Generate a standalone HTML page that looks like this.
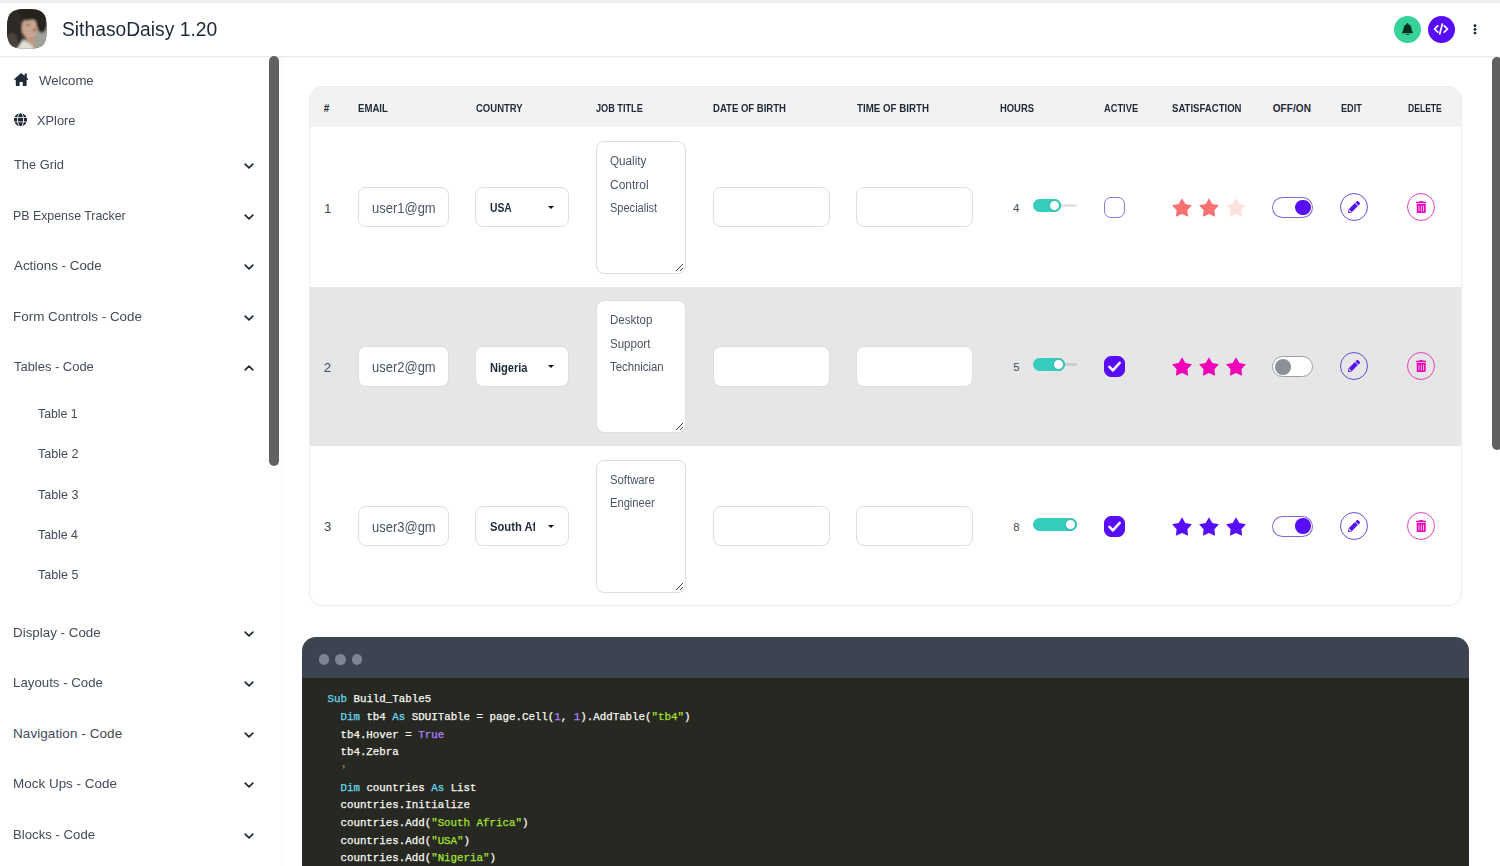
<!DOCTYPE html>
<html lang="en">
<head>
<meta charset="utf-8">
<title>SithasoDaisy 1.20</title>
<style>
*{box-sizing:border-box;margin:0;padding:0}
html,body{width:1500px;height:866px;overflow:hidden;background:#fff}
body{font-family:"Liberation Sans",sans-serif;color:#1f2937;position:relative}
.abs{position:absolute}
.t{position:absolute;white-space:nowrap;transform-origin:0 0}
/* navbar */
#nav{position:absolute;left:0;top:0;width:1500px;height:56px;background:#fff;box-shadow:0 1.200px 0 #ebebeb,0 2px 1.500px rgba(0,0,0,.035);z-index:5}
#topband{position:absolute;left:0;top:0;width:1500px;height:2.600px;background:linear-gradient(#f2f2f3,#ebebec)}
#avatar{position:absolute;left:6.900px;top:8.900px;width:39.800px;height:39.800px}
.ttl{color:#1f2937}
.cbtn{position:absolute;width:27.200px;height:27.200px;border-radius:50%;top:15.700px}
/* sidebar */
#side{position:absolute;left:0;top:58px;width:280px;height:808px;background:#fff}
.mi{color:#434b58}
.chev{position:absolute;left:243.500px;width:10px;height:6px}
#sthumb{position:absolute;left:269.200px;top:56.300px;width:9.800px;height:409.500px;border-radius:5px;background:#616161;z-index:6}
#sline{position:absolute;left:281px;top:58px;width:1px;height:808px;background:#f6f6f6}
#rthumb{position:absolute;left:1492.200px;top:56.500px;width:9.800px;height:393.500px;border-radius:5px;background:#616161;z-index:6}
/* table */
#card{position:absolute;left:309px;top:86.400px;width:1153px;height:520.100px;border-radius:13px;border:1px solid #eeeeee;background:#fff;overflow:hidden}
#thead{position:absolute;left:0;top:0;width:100%;height:39.200px;background:#f2f2f2}
.h{color:#1f2937}
.row{position:absolute;left:0;width:100%;height:159.300px}
.row.z{background:#e6e6e6}
.in{position:absolute;left:0;width:100%;height:100%}
.num{color:#434b58}
.em{color:#4b5563}
.co{color:#1f2937;overflow:hidden;max-width:45.500px}
.jb{color:#4b5563}
.hv{color:#434b58}
.inp{position:absolute;top:60px;height:40.300px;border:1px solid #dedede;border-radius:8px;background:#fff}
.ta{position:absolute;left:285.700px;top:14.200px;width:90px;height:132.900px;border:1px solid #dedede;border-radius:8px;background:#fff}
.car{position:absolute;left:72px;top:18px;width:0;height:0;border-left:3.500px solid transparent;border-right:3.500px solid transparent;border-top:3.500px solid #111}
.grip{position:absolute;right:1px;bottom:1px;width:9px;height:9px}
.rng{position:absolute;left:722.900px;top:72px;width:44.200px;height:13px}
.rng u{position:absolute;left:0;top:5px;width:44.200px;height:3px;border-radius:1.500px;background:rgba(0,0,0,.105)}
.rng s{position:absolute;left:0;top:0;height:13px;border-radius:6.500px;background:#37cdbe}
.rng i{position:absolute;top:0;width:13px;height:13px;border-radius:50%;background:#fff;border:2.300px solid #3ac4b6}
.cb{position:absolute;left:794px;top:70px;width:21px;height:21px;border-radius:7px;border:1px solid rgba(70,40,190,.62)}
.cb.on{background:#570df8;border-color:#570df8}
.star{position:absolute;top:71px;width:20px;height:19px}
.tg{position:absolute;left:962.400px;top:70px;width:40.400px;height:21px;border-radius:11px;border:1px solid rgba(70,40,190,.7);background:#fff}
.tg i{position:absolute;top:1.700px;width:15.600px;height:15.600px;border-radius:50%;background:#570df8;left:21.700px}
.tg.off{border-color:#9a9ea6}
.tg.off i{left:2px;background:#8b9099}
.rb{position:absolute;top:66px;width:28px;height:28px;border-radius:50%;border:1px solid rgba(75,30,215,.8);background:transparent}
.rb.d{border-color:rgba(225,20,175,.8)}
.rb svg{position:absolute}
/* code */
#mock{position:absolute;left:302.100px;top:637.300px;width:1166.500px;height:240px;border-radius:14px 14px 0 0;background:#3d4451;overflow:hidden}
#mock .dots{position:absolute;left:16.600px;top:17px}
#mock .dots i{display:inline-block;width:10.400px;height:10.400px;border-radius:50%;background:#7f8492;margin-right:6.100px;float:left}
#code{position:absolute;left:0;top:40.900px;width:100%;height:200px;background:#272822;color:#f8f8f2;font-family:"Liberation Mono",monospace;font-size:10.800px;line-height:17.650px;padding:13.100px 0 0 25.400px;white-space:pre;-webkit-text-stroke:.250px}
.k{color:#66d9ef}.n{color:#ae81ff}.s{color:#a6e22e}.c{color:#88887b}
</style>
</head>
<body>
<div id="nav">
  <div id="topband"></div>
  <svg id="avatar" viewBox="0 0 40 40">
    <defs>
      <clipPath id="sq"><path d="M20 0C4 0 0 4 0 20s4 20 20 20 20-4 20-20S36 0 20 0Z"/></clipPath>
      <filter id="bl" x="-10%" y="-10%" width="120%" height="120%"><feGaussianBlur stdDeviation="0.900"/></filter>
    </defs>
    <g clip-path="url(#sq)">
      <rect width="40" height="40" fill="#38312d"/>
      <g filter="url(#bl)">
        <rect x="-2" y="-2" width="44" height="44" fill="#38312d"/>
        <path d="M26 18L42 10V42H23Z" fill="#9fa098"/>
        <path d="M18 26h9.500l.5 12h-7z" fill="#bf9882"/>
        <ellipse cx="22.500" cy="19" rx="8" ry="10" fill="#caa690"/>
        <ellipse cx="27.500" cy="21" rx="1.800" ry="1.400" fill="#a5553f"/><ellipse cx="21" cy="16" rx="2" ry=".800" fill="#6b4a3e"/>
        <ellipse cx="35" cy="13" rx="5.500" ry="11" fill="#26211f"/>
        <ellipse cx="20" cy="3.500" rx="21" ry="8" fill="#26211f"/>
        <ellipse cx="6.500" cy="20" rx="8.500" ry="22" fill="#2f2926"/>
        <ellipse cx="5" cy="33" rx="6" ry="9" fill="#4a433d"/>
        <path d="M8.500 42L16.500 30.500 26 37.500 27 42Z" fill="#e0e0d4"/>
      </g>
    </g>
  </svg>
<div class="t nav ttl" style="left:62.00px;top:17.40px;font-size:19.4px;line-height:25px;transform:scaleX(0.9929);">SithasoDaisy 1.20</div>
  <div class="cbtn" style="left:1394px;background:#36d399"><svg class="abs" style="left:8.100px;top:7.100px" width="11" height="12.500" viewBox="0 0 448 512"><path fill="#013220" d="M224 512c35.320 0 63.970-28.650 63.970-64H160.030c0 35.350 28.650 64 63.970 64zm215.390-149.710c-19.320-20.760-55.470-51.990-55.470-154.290 0-77.700-54.480-139.900-127.940-155.160V32c0-17.670-14.320-32-31.980-32s-31.980 14.330-31.980 32v20.840C118.560 68.100 64.080 130.300 64.080 208c0 102.300-36.150 133.530-55.470 154.290-6 6.450-8.660 14.160-8.610 21.710.11 16.400 12.980 32 32.100 32h383.800c19.120 0 32-15.600 32.100-32 .05-7.550-2.610-15.270-8.610-21.710z"/></svg></div>
  <div class="cbtn" style="left:1427.900px;background:#570df8"><svg class="abs" style="left:5.600px;top:7.600px" width="16" height="12" viewBox="0 0 16 12"><path d="M4.800 2.800L1.500 6l3.300 3.200M11.200 2.800L14.500 6l-3.300 3.200M9.300 1L6.700 11" stroke="#fff" stroke-width="1.700" fill="none" stroke-linecap="round" stroke-linejoin="round"/></svg></div>
  <svg class="abs" style="left:1473px;top:23.900px" width="4" height="11" viewBox="0 0 4 11"><circle cx="2" cy="1.700" r="1.450" fill="#1f2937"/><circle cx="2" cy="5.400" r="1.450" fill="#1f2937"/><circle cx="2" cy="9.100" r="1.450" fill="#1f2937"/></svg>
</div>

<div id="side">
  <svg class="abs" style="left:13.800px;top:15px" width="14.400" height="13" viewBox="0 0 14.400 13"><path fill="#1f2937" d="M7.200 0L0 6.200l.9 1.100.9-.7v5.600a.8.8 0 0 0 .8.800h3V9h3.200v4h3a.8.8 0 0 0 .8-.8V6.600l.9.700.9-1.100-1.600-1.400V1a.4.4 0 0 0-.4-.400h-1.400a.4.4 0 0 0-.4.400v1.900z"/></svg>
  <svg class="abs" style="left:13.500px;top:55.300px" width="13.100" height="13.520" viewBox="0 0 496 512"><path fill="#1f2937" d="M336.5 160C322 70.7 287.8 8 248 8s-74 62.7-88.5 152h177zM152 256c0 22.2 1.2 43.5 3.3 64h185.3c2.1-20.5 3.3-41.8 3.3-64s-1.2-43.5-3.3-64H155.3c-2.1 20.5-3.3 41.8-3.3 64zm324.7-96c-28.6-67.9-86.5-120.4-158-141.6 24.4 33.8 41.2 84.7 50 141.6h108zM177.2 18.4C105.800 39.600 47.800 92.100 19.300 160h108c8.700-56.900 25.500-107.800 49.900-141.600zM487.400 192H372.700c2.100 21 3.300 42.500 3.300 64s-1.200 43-3.300 64h114.600c5.500-20.500 8.600-41.800 8.600-64s-3.100-43.500-8.500-64zM120 256c0-21.500 1.200-43 3.300-64H8.600C3.200 212.500 0 233.800 0 256s3.200 43.500 8.600 64h114.600c-2-21-3.200-42.500-3.200-64zm39.500 96c14.500 89.300 48.700 152 88.500 152s74-62.700 88.500-152h-177zm159.300 141.600c71.400-21.200 129.400-73.700 158-141.600h-108c-8.800 56.900-25.600 107.800-50 141.600zM19.300 352c28.600 67.900 86.500 120.400 158 141.600-24.400-33.800-41.200-84.700-50-141.600h-108z"/></svg>
  <svg class="chev" style="top:105.0px" viewBox="0 0 10 6"><path d="M1.200 1.200L5 4.800 8.800 1.200" stroke="#1f2937" stroke-width="1.700" fill="none" stroke-linecap="round" stroke-linejoin="round"/></svg>
  <svg class="chev" style="top:155.7px" viewBox="0 0 10 6"><path d="M1.200 1.200L5 4.800 8.800 1.200" stroke="#1f2937" stroke-width="1.700" fill="none" stroke-linecap="round" stroke-linejoin="round"/></svg>
  <svg class="chev" style="top:205.8px" viewBox="0 0 10 6"><path d="M1.200 1.200L5 4.800 8.800 1.200" stroke="#1f2937" stroke-width="1.700" fill="none" stroke-linecap="round" stroke-linejoin="round"/></svg>
  <svg class="chev" style="top:256.6px" viewBox="0 0 10 6"><path d="M1.200 1.200L5 4.800 8.800 1.200" stroke="#1f2937" stroke-width="1.700" fill="none" stroke-linecap="round" stroke-linejoin="round"/></svg>
  <svg class="chev" style="top:572.9px" viewBox="0 0 10 6"><path d="M1.200 1.200L5 4.800 8.800 1.200" stroke="#1f2937" stroke-width="1.700" fill="none" stroke-linecap="round" stroke-linejoin="round"/></svg>
  <svg class="chev" style="top:623.4px" viewBox="0 0 10 6"><path d="M1.200 1.200L5 4.800 8.800 1.200" stroke="#1f2937" stroke-width="1.700" fill="none" stroke-linecap="round" stroke-linejoin="round"/></svg>
  <svg class="chev" style="top:673.8px" viewBox="0 0 10 6"><path d="M1.200 1.200L5 4.800 8.800 1.200" stroke="#1f2937" stroke-width="1.700" fill="none" stroke-linecap="round" stroke-linejoin="round"/></svg>
  <svg class="chev" style="top:724.2px" viewBox="0 0 10 6"><path d="M1.200 1.200L5 4.800 8.800 1.200" stroke="#1f2937" stroke-width="1.700" fill="none" stroke-linecap="round" stroke-linejoin="round"/></svg>
  <svg class="chev" style="top:774.6px" viewBox="0 0 10 6"><path d="M1.200 1.200L5 4.800 8.800 1.200" stroke="#1f2937" stroke-width="1.700" fill="none" stroke-linecap="round" stroke-linejoin="round"/></svg>
  <svg class="chev" style="top:306.9px" viewBox="0 0 10 6"><path d="M1.200 4.800L5 1.200 8.800 4.800" stroke="#1f2937" stroke-width="1.700" fill="none" stroke-linecap="round" stroke-linejoin="round"/></svg>

<div class="t side mi" style="left:39.20px;top:13.70px;font-size:13.5px;line-height:18px;transform:scaleX(0.9764);">Welcome</div>
<div class="t side mi" style="left:37.30px;top:53.70px;font-size:13.5px;line-height:18px;transform:scaleX(0.9472);">XPlore</div>
<div class="t side mi" style="left:14.00px;top:98.00px;font-size:13.5px;line-height:18px;transform:scaleX(0.9518);">The Grid</div>
<div class="t side mi" style="left:13.08px;top:148.70px;font-size:13.5px;line-height:18px;transform:scaleX(0.9153);">PB Expense Tracker</div>
<div class="t side mi" style="left:14.00px;top:198.80px;font-size:13.5px;line-height:18px;transform:scaleX(0.9905);">Actions - Code</div>
<div class="t side mi" style="left:13.01px;top:249.60px;font-size:13.5px;line-height:18px;transform:scaleX(0.9939);">Form Controls - Code</div>
<div class="t side mi" style="left:14.00px;top:300.10px;font-size:13.5px;line-height:18px;transform:scaleX(0.9579);">Tables - Code</div>
<div class="t side mi" style="left:37.90px;top:346.90px;font-size:13.5px;line-height:18px;transform:scaleX(0.9111);">Table 1</div>
<div class="t side mi" style="left:37.90px;top:387.40px;font-size:13.5px;line-height:18px;transform:scaleX(0.9320);">Table 2</div>
<div class="t side mi" style="left:37.90px;top:427.80px;font-size:13.5px;line-height:18px;transform:scaleX(0.9320);">Table 3</div>
<div class="t side mi" style="left:37.90px;top:468.00px;font-size:13.5px;line-height:18px;transform:scaleX(0.9154);">Table 4</div>
<div class="t side mi" style="left:37.90px;top:508.40px;font-size:13.5px;line-height:18px;transform:scaleX(0.9320);">Table 5</div>
<div class="t side mi" style="left:13.01px;top:565.90px;font-size:13.5px;line-height:18px;transform:scaleX(0.9905);">Display - Code</div>
<div class="t side mi" style="left:13.02px;top:616.40px;font-size:13.5px;line-height:18px;transform:scaleX(0.9828);">Layouts - Code</div>
<div class="t side mi" style="left:13.00px;top:666.80px;font-size:13.5px;line-height:18px;letter-spacing:0.072px;">Navigation - Code</div>
<div class="t side mi" style="left:13.00px;top:717.20px;font-size:13.5px;line-height:18px;transform:scaleX(0.9973);">Mock Ups - Code</div>
<div class="t side mi" style="left:13.02px;top:767.60px;font-size:13.5px;line-height:18px;transform:scaleX(0.9767);">Blocks - Code</div>
</div>
<div id="sline"></div>
<div id="sthumb"></div>
<div id="rthumb"></div>

<div id="card">
  <div id="thead">
<div class="t th h" style="left:13.70px;top:14.80px;font-size:10.0px;line-height:13px;font-weight:700;">#</div>
<div class="t th h" style="left:48.00px;top:14.80px;font-size:10.0px;line-height:13px;transform:scaleX(0.9613);font-weight:700;">EMAIL</div>
<div class="t th h" style="left:165.80px;top:14.80px;font-size:10.0px;line-height:13px;transform:scaleX(0.9514);font-weight:700;">COUNTRY</div>
<div class="t th h" style="left:286.00px;top:14.80px;font-size:10.0px;line-height:13px;transform:scaleX(0.9156);font-weight:700;">JOB TITLE</div>
<div class="t th h" style="left:403.30px;top:14.80px;font-size:10.0px;line-height:13px;transform:scaleX(0.9534);font-weight:700;">DATE OF BIRTH</div>
<div class="t th h" style="left:546.70px;top:14.80px;font-size:10.0px;line-height:13px;transform:scaleX(0.9734);font-weight:700;">TIME OF BIRTH</div>
<div class="t th h" style="left:690.00px;top:14.80px;font-size:10.0px;line-height:13px;transform:scaleX(0.9412);font-weight:700;">HOURS</div>
<div class="t th h" style="left:794.30px;top:14.80px;font-size:10.0px;line-height:13px;transform:scaleX(0.9297);font-weight:700;">ACTIVE</div>
<div class="t th h" style="left:861.70px;top:14.80px;font-size:10.0px;line-height:13px;transform:scaleX(0.9576);font-weight:700;">SATISFACTION</div>
<div class="t th h" style="left:962.70px;top:14.80px;font-size:10.0px;line-height:13px;letter-spacing:0.090px;font-weight:700;">OFF/ON</div>
<div class="t th h" style="left:1030.70px;top:14.80px;font-size:10.0px;line-height:13px;transform:scaleX(0.9131);font-weight:700;">EDIT</div>
<div class="t th h" style="left:1097.90px;top:14.80px;font-size:10.0px;line-height:13px;transform:scaleX(0.8573);font-weight:700;">DELETE</div>
  </div>
<div class="row" style="top:39.6px">
<div class="in" style="top:0px">
<div class="inp" style="left:47.500px;width:91px"></div>
<div class="inp" style="left:165.300px;width:93.500px"><b class="car"></b></div>
<div class="ta"><svg class="grip" viewBox="0 0 10 10"><path d="M9 1L1 9M9 5.500L5.500 9" stroke="#333" stroke-width="1" fill="none"/></svg></div>
<div class="inp" style="left:403.300px;width:116.300px"></div>
<div class="inp" style="left:546.300px;width:116.300px"></div>
<div class="rng"><u></u><s style="width:28.6px"></s><i style="left:15.6px"></i></div>
<div class="cb"></div>
<svg class="star" style="left:862.0px;opacity:1" viewBox="0 0 192 180"><path fill="#f87171" d="m96 153.044-58.779 26.243 7.02-63.513L.894 68.481l63.117-13.01L96 0l31.989 55.472 63.117 13.01-43.347 47.292 7.02 63.513z"/></svg>
<svg class="star" style="left:889.2px;opacity:1" viewBox="0 0 192 180"><path fill="#f87171" d="m96 153.044-58.779 26.243 7.02-63.513L.894 68.481l63.117-13.01L96 0l31.989 55.472 63.117 13.01-43.347 47.292 7.02 63.513z"/></svg>
<svg class="star" style="left:916.4px;opacity:0.2" viewBox="0 0 192 180"><path fill="#f87171" d="m96 153.044-58.779 26.243 7.02-63.513L.894 68.481l63.117-13.01L96 0l31.989 55.472 63.117 13.01-43.347 47.292 7.02 63.513z"/></svg>
<div class="tg"><i></i></div>
<div class="rb" style="left:1029.500px"><svg viewBox="0 0 512 512" width="12" height="12" style="left:7px;top:7px"><path fill="#570df8" d="M497.9 142.1l-46.1 46.1c-4.7 4.7-12.3 4.7-17 0l-111-111c-4.7-4.7-4.7-12.3 0-17l46.1-46.1c18.700-18.700 49.100-18.700 67.900 0l60.100 60.100c18.800 18.700 18.800 49.100 0 67.900zM284.200 99.800L21.600 362.400.4 483.900c-2.900 16.400 11.400 30.600 27.800 27.800l121.500-21.300 262.600-262.600c4.700-4.700 4.700-12.300 0-17l-111-111c-4.800-4.700-12.400-4.700-17.100 0zM88 424h48v36.300l-64.500 11.300-31.100-31.100L51.700 376H88v48z"/></svg></div>
<div class="rb d" style="left:1097px"><svg viewBox="0 0 448 512" width="10.500" height="12" style="left:7.750px;top:7px"><path fill="#f000b8" fill-rule="evenodd" d="M32 464a48 48 0 0 0 48 48h288a48 48 0 0 0 48-48V128H32zm272-256a16 16 0 0 1 32 0v224a16 16 0 0 1-32 0zm-96 0a16 16 0 0 1 32 0v224a16 16 0 0 1-32 0zm-96 0a16 16 0 0 1 32 0v224a16 16 0 0 1-32 0zM432 32H312l-9.400-18.700A24 24 0 0 0 281.100 0H166.800a23.720 23.720 0 0 0-21.400 13.300L136 32H16A16 16 0 0 0 0 48v32a16 16 0 0 0 16 16h416a16 16 0 0 0 16-16V48a16 16 0 0 0-16-16z"/></svg></div>
<div class="t r1 num" style="left:13.90px;top:72.80px;font-size:13.2px;line-height:17px;">1</div>
<div class="t r1 em" style="left:62.20px;top:72.20px;font-size:14.2px;line-height:18px;transform:scaleX(0.9145);">user1@gm</div>
<div class="t r1 co" style="left:180.00px;top:73.30px;font-size:12px;line-height:16px;transform:scaleX(0.8609);font-weight:700;">USA</div>
<div class="t r1 jb" style="left:300.30px;top:26.20px;font-size:12px;line-height:16px;transform:scaleX(0.9746);">Quality</div>
<div class="t r1 jb" style="left:300.30px;top:49.70px;font-size:12px;line-height:16px;transform:scaleX(0.9969);">Control</div>
<div class="t r1 jb" style="left:300.30px;top:73.20px;font-size:12px;line-height:16px;transform:scaleX(0.9188);">Specialist</div>
<div class="t r1 hv" style="left:703.10px;top:74.10px;font-size:11.4px;line-height:15px;">4</div>
</div></div>
<div class="row z" style="top:199.6px">
<div class="in" style="top:-0.7px">
<div class="inp" style="left:47.500px;width:91px"></div>
<div class="inp" style="left:165.300px;width:93.500px"><b class="car"></b></div>
<div class="ta"><svg class="grip" viewBox="0 0 10 10"><path d="M9 1L1 9M9 5.500L5.500 9" stroke="#333" stroke-width="1" fill="none"/></svg></div>
<div class="inp" style="left:403.300px;width:116.300px"></div>
<div class="inp" style="left:546.300px;width:116.300px"></div>
<div class="rng"><u></u><s style="width:32.5px"></s><i style="left:19.5px"></i></div>
<div class="cb on"><svg viewBox="0 0 21 21" width="21" height="21" style="position:absolute;left:-1px;top:-1px"><path d="M5.400 10.900l3.500 3.500 6.800-7.500" stroke="#fff" stroke-width="2.600" fill="none" stroke-linecap="round" stroke-linejoin="round"/></svg></div>
<svg class="star" style="left:862.0px;opacity:1" viewBox="0 0 192 180"><path fill="#f000b8" d="m96 153.044-58.779 26.243 7.02-63.513L.894 68.481l63.117-13.01L96 0l31.989 55.472 63.117 13.01-43.347 47.292 7.02 63.513z"/></svg>
<svg class="star" style="left:889.2px;opacity:1" viewBox="0 0 192 180"><path fill="#f000b8" d="m96 153.044-58.779 26.243 7.02-63.513L.894 68.481l63.117-13.01L96 0l31.989 55.472 63.117 13.01-43.347 47.292 7.02 63.513z"/></svg>
<svg class="star" style="left:916.4px;opacity:1" viewBox="0 0 192 180"><path fill="#f000b8" d="m96 153.044-58.779 26.243 7.02-63.513L.894 68.481l63.117-13.01L96 0l31.989 55.472 63.117 13.01-43.347 47.292 7.02 63.513z"/></svg>
<div class="tg off"><i></i></div>
<div class="rb" style="left:1029.500px"><svg viewBox="0 0 512 512" width="12" height="12" style="left:7px;top:7px"><path fill="#570df8" d="M497.9 142.1l-46.1 46.1c-4.7 4.7-12.3 4.7-17 0l-111-111c-4.7-4.7-4.7-12.3 0-17l46.1-46.1c18.700-18.700 49.100-18.700 67.900 0l60.100 60.100c18.800 18.700 18.800 49.100 0 67.900zM284.200 99.800L21.600 362.400.4 483.900c-2.900 16.400 11.400 30.600 27.800 27.800l121.500-21.300 262.600-262.600c4.700-4.700 4.700-12.300 0-17l-111-111c-4.800-4.700-12.400-4.700-17.100 0zM88 424h48v36.300l-64.500 11.300-31.100-31.100L51.700 376H88v48z"/></svg></div>
<div class="rb d" style="left:1097px"><svg viewBox="0 0 448 512" width="10.500" height="12" style="left:7.750px;top:7px"><path fill="#f000b8" fill-rule="evenodd" d="M32 464a48 48 0 0 0 48 48h288a48 48 0 0 0 48-48V128H32zm272-256a16 16 0 0 1 32 0v224a16 16 0 0 1-32 0zm-96 0a16 16 0 0 1 32 0v224a16 16 0 0 1-32 0zm-96 0a16 16 0 0 1 32 0v224a16 16 0 0 1-32 0zM432 32H312l-9.400-18.700A24 24 0 0 0 281.100 0H166.800a23.720 23.720 0 0 0-21.400 13.300L136 32H16A16 16 0 0 0 0 48v32a16 16 0 0 0 16 16h416a16 16 0 0 0 16-16V48a16 16 0 0 0-16-16z"/></svg></div>
<div class="t r2 num" style="left:13.70px;top:72.80px;font-size:13.2px;line-height:17px;">2</div>
<div class="t r2 em" style="left:62.20px;top:72.20px;font-size:14.2px;line-height:18px;transform:scaleX(0.9145);">user2@gm</div>
<div class="t r2 co" style="left:180.40px;top:73.30px;font-size:12px;line-height:16px;transform:scaleX(0.9218);font-weight:700;">Nigeria</div>
<div class="t r2 jb" style="left:300.30px;top:26.20px;font-size:12px;line-height:16px;transform:scaleX(0.9606);">Desktop</div>
<div class="t r2 jb" style="left:300.30px;top:49.70px;font-size:12px;line-height:16px;transform:scaleX(0.9603);">Support</div>
<div class="t r2 jb" style="left:300.30px;top:73.20px;font-size:12px;line-height:16px;transform:scaleX(0.9460);">Technician</div>
<div class="t r2 hv" style="left:703.30px;top:74.10px;font-size:11.4px;line-height:15px;">5</div>
</div></div>
<div class="row" style="top:358.9px">
<div class="in" style="top:-0.75px">
<div class="inp" style="left:47.500px;width:91px"></div>
<div class="inp" style="left:165.300px;width:93.500px"><b class="car"></b></div>
<div class="ta"><svg class="grip" viewBox="0 0 10 10"><path d="M9 1L1 9M9 5.500L5.500 9" stroke="#333" stroke-width="1" fill="none"/></svg></div>
<div class="inp" style="left:403.300px;width:116.300px"></div>
<div class="inp" style="left:546.300px;width:116.300px"></div>
<div class="rng"><u></u><s style="width:44.2px"></s><i style="left:31.2px"></i></div>
<div class="cb on"><svg viewBox="0 0 21 21" width="21" height="21" style="position:absolute;left:-1px;top:-1px"><path d="M5.400 10.900l3.500 3.500 6.800-7.500" stroke="#fff" stroke-width="2.600" fill="none" stroke-linecap="round" stroke-linejoin="round"/></svg></div>
<svg class="star" style="left:862.0px;opacity:1" viewBox="0 0 192 180"><path fill="#570df8" d="m96 153.044-58.779 26.243 7.02-63.513L.894 68.481l63.117-13.01L96 0l31.989 55.472 63.117 13.01-43.347 47.292 7.02 63.513z"/></svg>
<svg class="star" style="left:889.2px;opacity:1" viewBox="0 0 192 180"><path fill="#570df8" d="m96 153.044-58.779 26.243 7.02-63.513L.894 68.481l63.117-13.01L96 0l31.989 55.472 63.117 13.01-43.347 47.292 7.02 63.513z"/></svg>
<svg class="star" style="left:916.4px;opacity:1" viewBox="0 0 192 180"><path fill="#570df8" d="m96 153.044-58.779 26.243 7.02-63.513L.894 68.481l63.117-13.01L96 0l31.989 55.472 63.117 13.01-43.347 47.292 7.02 63.513z"/></svg>
<div class="tg"><i></i></div>
<div class="rb" style="left:1029.500px"><svg viewBox="0 0 512 512" width="12" height="12" style="left:7px;top:7px"><path fill="#570df8" d="M497.9 142.1l-46.1 46.1c-4.7 4.7-12.3 4.7-17 0l-111-111c-4.7-4.7-4.7-12.3 0-17l46.1-46.1c18.700-18.700 49.100-18.700 67.900 0l60.100 60.100c18.800 18.700 18.800 49.100 0 67.900zM284.200 99.800L21.600 362.400.4 483.900c-2.900 16.400 11.400 30.600 27.800 27.800l121.500-21.300 262.600-262.600c4.700-4.700 4.700-12.300 0-17l-111-111c-4.800-4.700-12.400-4.700-17.100 0zM88 424h48v36.300l-64.500 11.300-31.100-31.100L51.700 376H88v48z"/></svg></div>
<div class="rb d" style="left:1097px"><svg viewBox="0 0 448 512" width="10.500" height="12" style="left:7.750px;top:7px"><path fill="#f000b8" fill-rule="evenodd" d="M32 464a48 48 0 0 0 48 48h288a48 48 0 0 0 48-48V128H32zm272-256a16 16 0 0 1 32 0v224a16 16 0 0 1-32 0zm-96 0a16 16 0 0 1 32 0v224a16 16 0 0 1-32 0zm-96 0a16 16 0 0 1 32 0v224a16 16 0 0 1-32 0zM432 32H312l-9.400-18.700A24 24 0 0 0 281.100 0H166.800a23.720 23.720 0 0 0-21.400 13.300L136 32H16A16 16 0 0 0 0 48v32a16 16 0 0 0 16 16h416a16 16 0 0 0 16-16V48a16 16 0 0 0-16-16z"/></svg></div>
<div class="t r3 num" style="left:14.00px;top:72.80px;font-size:13.2px;line-height:17px;">3</div>
<div class="t r3 em" style="left:62.20px;top:72.20px;font-size:14.2px;line-height:18px;transform:scaleX(0.9145);">user3@gm</div>
<div class="t r3 co" style="left:180.20px;top:73.30px;font-size:12px;line-height:16px;font-weight:700;transform:scaleX(.935);max-width:47.900px;">South Africa</div>
<div class="t r3 jb" style="left:300.30px;top:26.20px;font-size:12px;line-height:16px;transform:scaleX(0.9438);">Software</div>
<div class="t r3 jb" style="left:300.30px;top:49.70px;font-size:12px;line-height:16px;transform:scaleX(0.9305);">Engineer</div>
<div class="t r3 hv" style="left:703.20px;top:74.10px;font-size:11.4px;line-height:15px;">8</div>
</div></div>

</div>

<div id="mock">
  <div class="dots"><i></i><i></i><i></i></div>
<div id="code"><span class="k">Sub</span> Build_Table5
  <span class="k">Dim</span> tb4 <span class="k">As</span> SDUITable = page.Cell(<span class="n">1</span>, <span class="n">1</span>).AddTable(<span class="s">"tb4"</span>)
  tb4.Hover = <span class="n">True</span>
  tb4.Zebra
  <span class="c">'</span>
  <span class="k">Dim</span> countries <span class="k">As</span> List
  countries.Initialize
  countries.Add(<span class="s">"South Africa"</span>)
  countries.Add(<span class="s">"USA"</span>)
  countries.Add(<span class="s">"Nigeria"</span>)
  countries.Add(<span class="s">"Kenya"</span>)</div>
</div>
</body>
</html>
